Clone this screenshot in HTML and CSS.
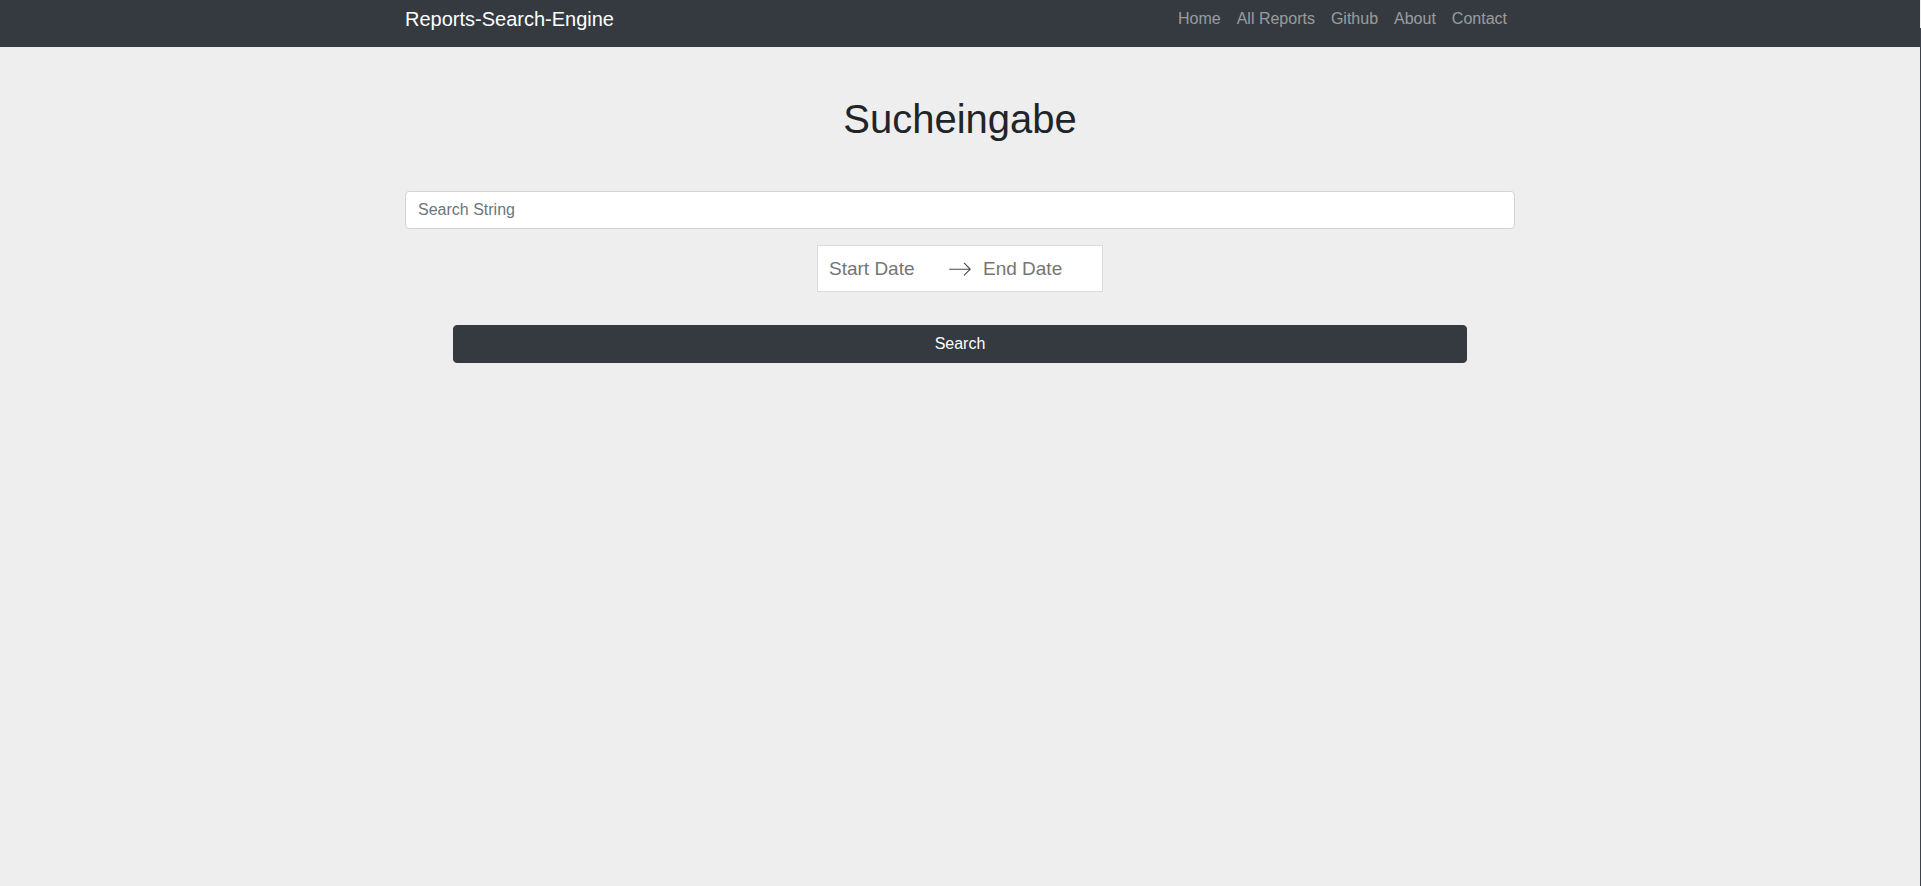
FILE: index.html
```html
<!DOCTYPE html>
<html lang="de">
<head>
<meta charset="utf-8">
<title>Reports-Search-Engine</title>
<link rel="stylesheet" href="styles.css">
</head>
<body>
<nav class="navbar">
  <div class="container nav-inner">
    <a class="brand" href="#">Reports-Search-Engine</a>
    <ul class="nav-links">
      <li><a href="#">Home</a></li>
      <li><a href="#">All Reports</a></li>
      <li><a href="#">Github</a></li>
      <li><a href="#">About</a></li>
      <li><a href="#">Contact</a></li>
    </ul>
  </div>
</nav>
<main class="container main">
  <h1 class="title">Sucheingabe</h1>
  <input class="search-input" type="text" placeholder="Search String">
  <div class="date-row">
    <div class="date-picker">
      <input class="date-input" type="text" placeholder="Start Date">
      <span class="arrow">
        <svg viewBox="0 0 1000 1000" width="24" height="24" aria-hidden="true"><path d="M694 242l249 250c12 11 12 21 1 32L694 774c-5 5-10 7-16 7s-11-2-16-7c-11-11-11-21 0-32l210-210H68c-13 0-23-10-23-23s10-23 23-23h806L662 275c-21-22 11-54 32-33z"/></svg>
      </span>
      <input class="date-input" type="text" placeholder="End Date">
    </div>
  </div>
  <button class="search-btn" type="button">Search</button>
</main>
<div class="edge-line"></div>
</body>
</html>
```
FILE: styles.css
```css
* { box-sizing: border-box; }
html, body {
  margin: 0;
  padding: 0;
}
body {
  background: #eeeeee;
  font-family: "Liberation Sans", Arial, sans-serif;
  font-size: 16px;
  line-height: 1.5;
  color: #212529;
  min-height: 886px;
  padding-right: 1px;
}
.container {
  width: 1140px;
  margin: 0 auto;
  padding: 0 15px;
}
.navbar {
  background: #343a40;
  height: 47px;
}
.nav-inner {
  display: flex;
  justify-content: space-between;
  align-items: flex-start;
  padding-top: 4px;
}
.brand {
  color: #ffffff;
  font-size: 20px;
  line-height: 30px;
  text-decoration: none;
}
.nav-links {
  list-style: none;
  margin: 0;
  padding: 2.5px 0 0;
  display: flex;
}
.nav-links a {
  display: block;
  padding: 0 8px;
  color: rgba(255, 255, 255, 0.5);
  text-decoration: none;
  line-height: 24px;
}
.main {
  display: flex;
  flex-direction: column;
  padding-top: 48px;
}
.title {
  margin: 0;
  font-size: 40px;
  font-weight: 500;
  line-height: 48px;
  text-align: center;
  color: #212529;
}
.search-input {
  margin-top: 48px;
  width: 100%;
  height: 38px;
  padding: 6px 12px;
  font: inherit;
  font-size: 16px;
  line-height: 24px;
  color: #495057;
  background: #fff;
  border: 1px solid #ced4da;
  border-radius: 4px;
  outline: none;
}
.search-input::placeholder { color: #6c757d; opacity: 1; }
.date-row {
  margin-top: 16px;
  display: flex;
  justify-content: center;
}
.date-picker {
  display: flex;
  align-items: center;
  background: #fff;
  border: 1px solid #dbdbdb;
}
.date-input {
  width: 130px;
  height: 45px;
  padding: 11px 11px 10px;
  border: 0;
  font-family: inherit;
  font-size: 19px;
  line-height: 24px;
  font-weight: 200;
  color: #484848;
  background: #fff;
  outline: none;
}
.date-input::placeholder { color: #757575; opacity: 1; }
.arrow {
  display: flex;
  width: 24px;
  height: 24px;
}
.arrow svg { fill: #484848; }
.search-btn {
  margin: 33px auto 0;
  width: 1014px;
  height: 38px;
  background: #343a40;
  border: 1px solid #343a40;
  border-radius: 4px;
  color: #fff;
  font-family: inherit;
  font-size: 16px;
  line-height: 24px;
  padding: 6px 12px;
}
.edge-line {
  position: fixed;
  right: 0;
  top: 28px;
  bottom: 0;
  width: 1px;
  background: #3d424a;
}
```
